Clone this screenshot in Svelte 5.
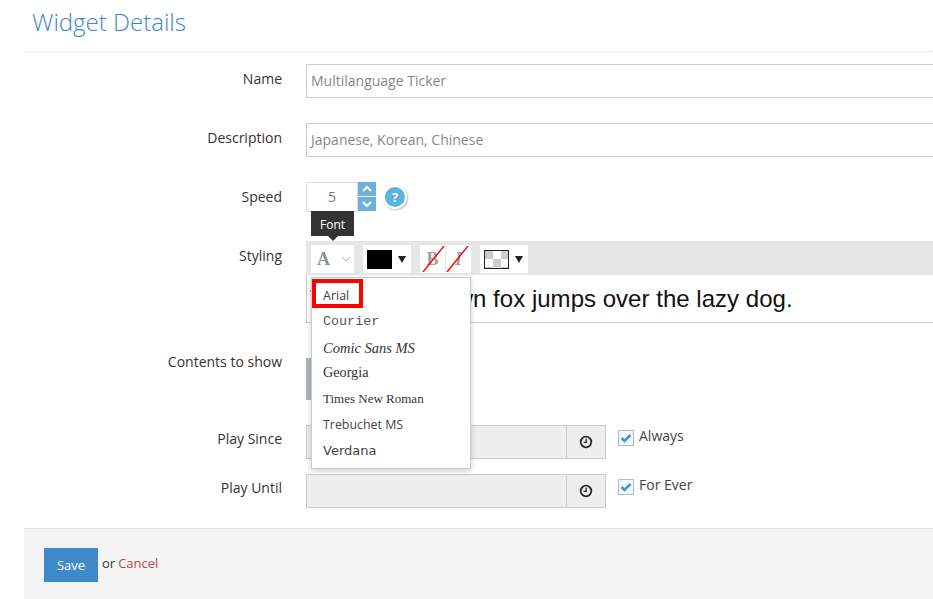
<script>
  const fonts = [
    { name: 'Arial', cls: 'f-arial' },
    { name: 'Courier', cls: 'f-courier' },
    { name: 'Comic Sans MS', cls: 'f-comic' },
    { name: 'Georgia', cls: 'f-georgia' },
    { name: 'Times New Roman', cls: 'f-times' },
    { name: 'Trebuchet MS', cls: 'f-trebuchet' },
    { name: 'Verdana', cls: 'f-verdana' }
  ];
</script>

<div class="page">
  <h1 class="title">Widget Details</h1>

  <div class="form">
    <div class="row row-name">
      <div class="label">Name</div>
      <div class="field"><div class="input">Multilanguage Ticker</div></div>
    </div>
    <div class="row row-desc">
      <div class="label">Description</div>
      <div class="field"><div class="input">Japanese, Korean, Chinese</div></div>
    </div>
    <div class="row row-speed">
      <div class="label">Speed</div>
      <div class="field speed">
        <div class="num">5</div>
        <div class="spin">
          <span class="up"><svg width="12" height="8" viewBox="0 0 12 8"><path d="M2 6l4-4 4 4" fill="none" stroke="#fff" stroke-width="2"/></svg></span>
          <span class="down"><svg width="12" height="8" viewBox="0 0 12 8"><path d="M2 2l4 4 4-4" fill="none" stroke="#fff" stroke-width="2"/></svg></span>
        </div>
        <div class="help">?</div>
      </div>
    </div>
    <div class="row row-style">
      <div class="label">Styling</div>
      <div class="field editor">
        <div class="toolbar">
          <div class="tool tool-font">
            <span class="a">A</span>
            <svg width="10" height="6" viewBox="0 0 10 6"><path d="M1 1l4 4 4-4" fill="none" stroke="#a9b4bd" stroke-width="1"/></svg>
          </div>
          <div class="tool tool-color"><span class="swatch"></span><span class="caret"></span></div>
          <div class="tool tool-b">
            <span class="b">B</span>
            <svg class="strike" width="25" height="26" viewBox="0 0 25 26"><path d="M3 26L24 0" stroke="#f00" stroke-width="1.4"/></svg>
          </div>
          <div class="tool tool-i">
            <span class="i">I</span>
            <svg class="strike" width="25" height="26" viewBox="0 0 25 26"><path d="M1 26L22 0" stroke="#f00" stroke-width="1.4"/></svg>
          </div>
          <div class="tool tool-bg"><span class="checker"></span><span class="caret"></span></div>
        </div>
        <div class="preview">The quick brown fox jumps over the lazy dog.</div>
        <div class="tip">Font</div>
        <div class="menu">
          <div class="selected"></div>
          {#each fonts as f}
            <div class="item {f.cls}">{f.name}</div>
          {/each}
        </div>
      </div>
    </div>
    <div class="row row-contents">
      <div class="label">Contents to show</div>
      <div class="field"><div class="contents-btn"></div></div>
    </div>
    <div class="row row-since">
      <div class="label">Play Since</div>
      <div class="field dates">
        <div class="date"><div class="date-text"></div><div class="addon">
          <svg width="14" height="14" viewBox="0 0 14 14"><circle cx="7" cy="7" r="5.3" fill="none" stroke="#2b2b2b" stroke-width="1.8"/><path d="M7.2 3.8V7.4H4.6" fill="none" stroke="#2b2b2b" stroke-width="1.4"/></svg>
        </div></div>
        <label class="check"><span class="box"><svg width="12" height="10" viewBox="0 0 12 10"><path d="M1.5 5l3 3 6-6" fill="none" stroke="#3a9bd5" stroke-width="2.6"/></svg></span><span class="check-text">Always</span></label>
      </div>
    </div>
    <div class="row row-until">
      <div class="label">Play Until</div>
      <div class="field dates">
        <div class="date"><div class="date-text"></div><div class="addon">
          <svg width="14" height="14" viewBox="0 0 14 14"><circle cx="7" cy="7" r="5.3" fill="none" stroke="#2b2b2b" stroke-width="1.8"/><path d="M7.2 3.8V7.4H4.6" fill="none" stroke="#2b2b2b" stroke-width="1.4"/></svg>
        </div></div>
        <label class="check"><span class="box"><svg width="12" height="10" viewBox="0 0 12 10"><path d="M1.5 5l3 3 6-6" fill="none" stroke="#3a9bd5" stroke-width="2.6"/></svg></span><span class="check-text">For Ever</span></label>
      </div>
    </div>
  </div>

  <div class="footer">
    <button class="save">Save</button>
    <span class="or">or</span>
    <span class="cancel">Cancel</span>
  </div>
</div>

<style>
  :global(body) { margin: 0; background: #fff; overflow: hidden; }
  .page {
    width: 933px; height: 599px; overflow: hidden; box-sizing: border-box;
    padding-left: 24px; font-family: "Open Sans", sans-serif; font-size: 14px; color: #333;
  }
  .title {
    margin: 0; height: 52px; box-sizing: border-box; padding: 6px 0 0 8px;
    font-size: 24px; font-weight: 300; line-height: 32px; color: #3a87c8;
    border-bottom: 1px dotted #ddd;
  }
  .form { display: flex; flex-direction: column; }
  .row { display: grid; grid-template-columns: 258px 1fr; column-gap: 24px; }
  .label { text-align: right; line-height: 20px; padding-top: 5px; }
  .field { min-width: 0; margin-right: -6px; }
  .row-name { margin-top: 12px; height: 34px; }
  .row-desc { margin-top: 25px; height: 34px; }
  .row-speed { margin-top: 25px; height: 30px; }
  .row-style { margin-top: 29px; height: 82px; }
  .row-contents { margin-top: 35px; height: 42px; }
  .row-since { margin-top: 25px; height: 34px; }
  .row-until { margin-top: 15px; height: 34px; }
  .row-since .label, .row-until .label { padding-top: 4px; }
  .row-contents .label { padding-top: 0; margin-top: -6px; }
  .input {
    height: 34px; box-sizing: border-box; border: 1px solid #ccc; padding: 0 4px;
    line-height: 32px; color: #888; font-size: 14px;
  }
  .speed { display: flex; align-items: flex-start; }
  .num {
    width: 52px; height: 30px; box-sizing: border-box; border: 1px solid #ddd; text-align: center;
    line-height: 28px; color: #777;
  }
  .spin { width: 18px; height: 29px; display: flex; flex-direction: column; gap: 1px; }
  .spin span { flex: 1; background: #6cb0e0; display: flex; align-items: center; justify-content: center; }
  .help {
    width: 20px; height: 20px; margin: 5px 0 0 9px; border-radius: 50%; background: #5ab4dc; color: #fff;
    font-weight: 700; font-size: 13px; line-height: 20px; text-align: center;
    box-shadow: 0 0 0 2px #fff, 1px 1px 2px 2px #bbb;
  }
  .editor { position: relative; }
  .toolbar {
    height: 34px; background: #e6e6e6; box-sizing: border-box; padding: 4px 0 0 5px;
    display: flex; align-items: flex-start;
  }
  .tool { height: 28px; background: #fff; display: flex; align-items: center; position: relative; box-sizing: border-box; }
  .tool-font { width: 43px; padding-left: 6px; gap: 12px; justify-content: flex-start; }
  .a { font-family: "Liberation Serif", serif; font-weight: 700; font-size: 18px; color: #8a949c; width: 13px; }
  .tool-font svg { margin-left: -1px; }
  .tool-color { width: 48px; margin-left: 9px; padding-left: 4px; gap: 6px; }
  .swatch { width: 25px; height: 19px; background: #000; }
  .caret { width: 0; height: 0; border-left: 4px solid transparent; border-right: 4px solid transparent; border-top: 7px solid #222; }
  .tool-b { width: 25px; margin-left: 9px; justify-content: center; }
  .tool-i { width: 25px; margin-left: 1px; justify-content: center; }
  .b, .i { font-family: "Liberation Serif", serif; font-weight: 700; font-size: 18px; color: #9aa3aa; }
  .i { font-style: italic; }
  .strike { position: absolute; left: 0; top: 1px; }
  .tool-bg { width: 48px; margin-left: 9px; padding-left: 4px; gap: 6px; }
  .checker {
    width: 23px; height: 17px; border: 1px solid #222;
    background: repeating-conic-gradient(#ccc 0 25%, #fff 0 50%) 8px 0 / 16px 16px;
  }
  .preview {
    height: 48px; box-sizing: border-box; border: 1px solid #ccc; border-top: 0;
    font-family: "Liberation Sans", sans-serif; font-size: 24px; line-height: 48px; color: #111;
    padding-left: 3px; letter-spacing: .023px; white-space: nowrap;
  }
  .tip {
    position: absolute; left: 5px; top: -30px; width: 43px; height: 25px; background: #333; color: #fff;
    font-size: 12px; line-height: 27px; text-align: center;
  }
  .tip::after {
    content: ""; position: absolute; left: 17px; top: 25px; border: 5px solid transparent; border-bottom: 0; border-top-color: #333;
  }
  .menu {
    position: absolute; left: 5px; top: 36px; width: 160px; height: 192px; box-sizing: border-box;
    background: #fff; border: 1px solid #ccc; box-shadow: 0 2px 6px rgba(0,0,0,.2); padding-top: 5px;
  }
  .selected { position: absolute; left: 0; top: 1px; width: 51px; height: 29px; box-sizing: border-box; border: 4px solid #f00; }
  .item { height: 26px; line-height: 26px; padding-left: 11px; color: #444; white-space: nowrap; }
  .f-arial { font-family: "Open Sans", sans-serif; font-size: 12.5px; }
  .f-courier { font-family: "Liberation Mono", monospace; font-size: 13.4px; color: #555; }
  .f-comic { font-family: "Liberation Serif", serif; font-style: italic; font-size: 14.5px; height: 25px; line-height: 26px; color: #333; }
  .f-georgia { font-family: "Liberation Serif", serif; font-size: 14.2px; line-height: 24px; color: #333; }
  .f-times { font-family: "Liberation Serif", serif; font-size: 13px; line-height: 26px; color: #333; }
  .f-trebuchet { font-family: "Open Sans", sans-serif; font-size: 12.4px; }
  .f-verdana { font-family: "DejaVu Sans", sans-serif; font-size: 13px; font-weight: 400; }
  .contents-btn { width: 60px; height: 42px; background: #a8b8c2; }
  .dates { display: flex; align-items: flex-start; }
  .date { width: 300px; height: 34px; box-sizing: border-box; border: 1px solid #ccc; background: #eee; display: flex; }
  .date-text { flex: 1; }
  .addon { width: 38px; border-left: 1px solid #ccc; display: flex; align-items: center; justify-content: center; }
  .check { display: flex; align-items: flex-start; margin-left: 12px; gap: 5px; }
  .box {
    width: 16px; height: 16px; box-sizing: border-box; border: 1px solid #a9bccb; background: #f4f7fa; margin-top: 5px;
    display: flex; align-items: center; justify-content: center;
  }
  .check-text { line-height: 20px; margin-top: 1px; color: #444; }
  .footer {
    margin-top: 20px; height: 71px; box-sizing: border-box; background: #f4f4f5; border-top: 1px solid #e5e5e5;
    padding: 19px 0 0 20px; display: flex; align-items: flex-start; gap: 4px; margin-right: -24px;
  }
  .save {
    width: 54px; height: 34px; border: 0; background: #3f8ac9; color: #fff; font: 13px "Open Sans", sans-serif; padding: 0;
  }
  .or { line-height: 30px; font-size: 13px; }
  .cancel { line-height: 30px; font-size: 13px; color: #b94a48; margin-left: -1px; }
</style>
